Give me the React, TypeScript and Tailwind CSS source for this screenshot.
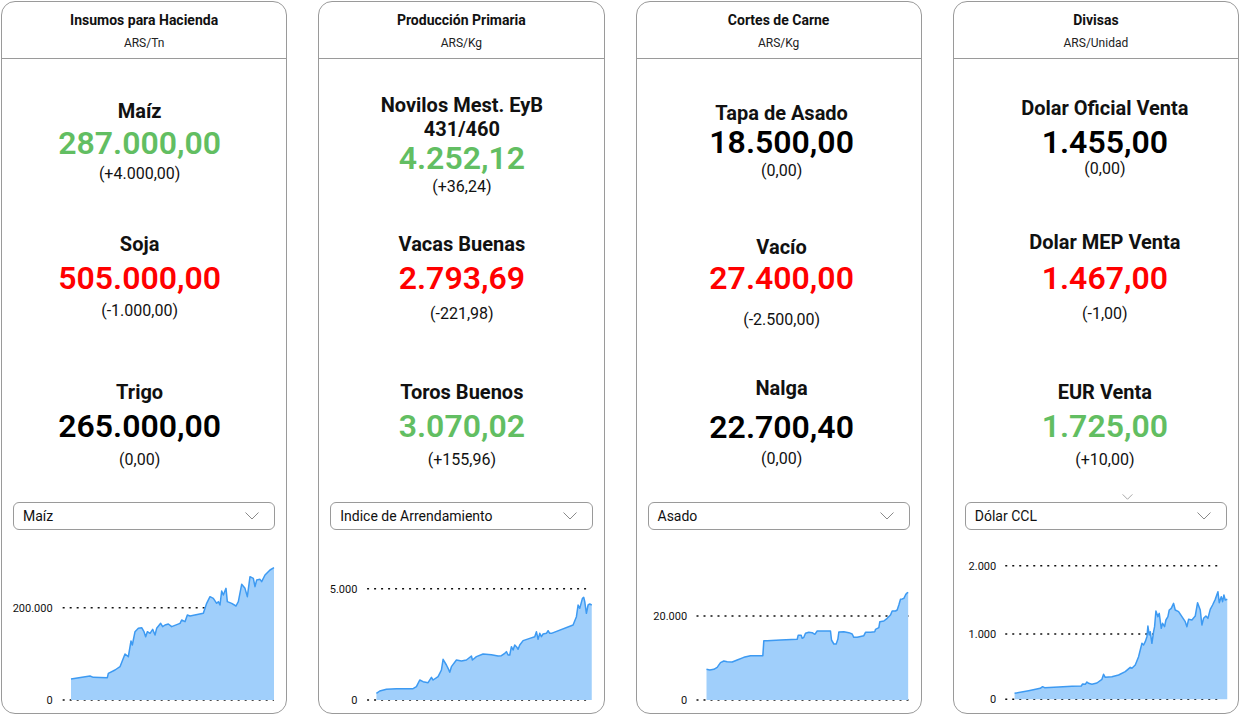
import React from 'react';

type Quote = {
  name: string[];
  value: string;
  change: string;
  tone: 'up' | 'down' | 'flat';
  gap: string;
  valueGap: string;
  changeGap: string;
};

type Chart = {
  viewBox: string;
  baseline: number;
  left: number;
  right: number;
  labelEnd: number;
  ticks: { y: number; label: string }[];
  points: [number, number][];
};

type Panel = {
  title: string;
  unit: string;
  shift: string;
  quotes: Quote[];
  select: string;
  chart: Chart;
  stray?: boolean;
};

const panels: Panel[] = [
  {
    title: 'Insumos para Hacienda',
    unit: 'ARS/Tn',
    shift: 'pr-[9px]',
    select: 'Maíz',
    quotes: [
      { name: ['Maíz'], value: '287.000,00', change: '(+4.000,00)', tone: 'up', gap: 'mt-[40px]', valueGap: 'mt-[2px]', changeGap: 'mt-[3px]' },
      { name: ['Soja'], value: '505.000,00', change: '(-1.000,00)', tone: 'down', gap: 'mt-[48px]', valueGap: 'mt-[4px]', changeGap: 'mt-[5px]' },
      { name: ['Trigo'], value: '265.000,00', change: '(0,00)', tone: 'flat', gap: 'mt-[59px]', valueGap: 'mt-[4px]', changeGap: 'mt-[6px]' },
    ],
    chart: {
      viewBox: '6 165 852.75 531',
      baseline: 660,
      left: 188,
      right: 822,
      labelEnd: 158,
      ticks: [{ y: 383, label: '200.000' }, { y: 660, label: '0' }],
      points: [
        [213, 597], [270, 588], [280, 592], [322, 593], [325, 580], [345, 570], [360, 560], [375, 522], [385, 530],
        [393, 483], [397, 495], [405, 455], [415, 445], [425, 443], [432, 455], [437, 470], [442, 455], [450, 460],
        [458, 448], [465, 465], [470, 445], [482, 430], [488, 440], [495, 435], [505, 432], [515, 440], [540, 430],
        [545, 420], [555, 425], [562, 405], [570, 408], [610, 400], [620, 370], [630, 350], [640, 355], [650, 370],
        [655, 365], [660, 375], [665, 333], [670, 345], [678, 325], [682, 365], [695, 370], [708, 378], [715, 365],
        [725, 313], [735, 325], [742, 350], [750, 290], [760, 295], [765, 320], [770, 300], [780, 298], [785, 305],
        [795, 285], [810, 270], [822, 263],
      ],
    },
  },
  {
    title: 'Producción Primaria',
    unit: 'ARS/Kg',
    shift: 'pl-px',
    select: 'Indice de Arrendamiento',
    quotes: [
      { name: ['Novilos Mest. EyB', '431/460'], value: '4.252,12', change: '(+36,24)', tone: 'up', gap: 'mt-[34px]', valueGap: '-mt-px', changeGap: 'mt-[1px]' },
      { name: ['Vacas Buenas'], value: '2.793,69', change: '(-221,98)', tone: 'down', gap: 'mt-[35px]', valueGap: 'mt-[4px]', changeGap: 'mt-[8px]' },
      { name: ['Toros Buenos'], value: '3.070,02', change: '(+155,96)', tone: 'up', gap: 'mt-[56px]', valueGap: 'mt-[4px]', changeGap: 'mt-[6px]' },
    ],
    chart: {
      viewBox: '27.75 165 852.75 531',
      baseline: 660,
      left: 172,
      right: 840,
      labelEnd: 143,
      ticks: [{ y: 326, label: '5.000' }, { y: 660, label: '0' }],
      points: [
        [200, 640], [210, 633], [230, 628], [260, 626], [310, 626], [320, 620], [330, 600], [340, 605], [355, 608],
        [365, 592], [370, 600], [385, 590], [395, 570], [400, 538], [410, 555], [415, 565], [420, 577], [425, 560],
        [440, 540], [455, 543], [470, 540], [485, 528], [488, 540], [500, 530], [520, 522], [545, 524], [565, 528],
        [575, 527], [585, 520], [590, 515], [595, 525], [600, 525], [605, 500], [610, 510], [615, 495], [620, 500],
        [625, 508], [630, 495], [640, 482], [660, 475], [675, 470], [680, 455], [685, 478], [690, 460], [695, 470],
        [700, 462], [710, 460], [715, 452], [720, 460], [725, 460], [790, 435], [800, 410], [805, 375], [810, 385],
        [818, 355], [822, 352], [825, 365], [830, 400], [835, 375], [840, 372], [846, 375],
      ],
    },
  },
  {
    title: 'Cortes de Carne',
    unit: 'ARS/Kg',
    shift: 'pl-[6px]',
    select: 'Asado',
    quotes: [
      { name: ['Tapa de Asado'], value: '18.500,00', change: '(0,00)', tone: 'flat', gap: 'mt-[42px]', valueGap: '-mt-px', changeGap: 'mt-[1px]' },
      { name: ['Vacío'], value: '27.400,00', change: '(-2.500,00)', tone: 'down', gap: 'mt-[54px]', valueGap: 'mt-[1px]', changeGap: 'mt-[14px]' },
      { name: ['Nalga'], value: '22.700,40', change: '(0,00)', tone: 'flat', gap: 'mt-[46px]', valueGap: 'mt-[9px]', changeGap: 'mt-[4px]' },
    ],
    chart: {
      viewBox: '19.5 165 852.75 531',
      baseline: 660,
      left: 198,
      right: 835,
      labelEnd: 170,
      ticks: [{ y: 408, label: '20.000' }, { y: 660, label: '0' }],
      points: [
        [228, 568], [238, 570], [250, 568], [260, 562], [270, 548], [280, 543], [290, 545], [305, 546], [320, 540],
        [340, 532], [360, 527], [380, 527], [397, 527], [400, 482], [410, 482], [450, 480], [500, 478], [503, 466],
        [512, 466], [515, 475], [520, 472], [525, 460], [535, 457], [545, 458], [553, 463], [560, 453], [600, 453],
        [603, 480], [610, 492], [617, 492], [622, 478], [625, 456], [640, 455], [655, 458], [665, 462], [670, 472],
        [680, 472], [700, 467], [705, 457], [720, 457], [733, 455], [735, 448], [745, 443], [748, 425], [760, 423],
        [770, 415], [780, 405], [785, 393], [795, 393], [800, 390], [805, 375], [810, 358], [815, 357], [820, 355],
        [825, 345], [828, 340], [833, 337],
      ],
    },
  },
  {
    title: 'Divisas',
    unit: 'ARS/Unidad',
    shift: 'pl-[18px]',
    select: 'Dólar CCL',
    stray: true,
    quotes: [
      { name: ['Dolar Oficial Venta'], value: '1.455,00', change: '(0,00)', tone: 'flat', gap: 'mt-[37px]', valueGap: 'mt-[4px]', changeGap: '-mt-px' },
      { name: ['Dolar MEP Venta'], value: '1.467,00', change: '(-1,00)', tone: 'down', gap: 'mt-[51px]', valueGap: 'mt-[6px]', changeGap: 'mt-[8px]' },
      { name: ['EUR Venta'], value: '1.725,00', change: '(+10,00)', tone: 'up', gap: 'mt-[56px]', valueGap: 'mt-[4px]', changeGap: 'mt-[6px]' },
    ],
    chart: {
      viewBox: '26.25 165 852.75 531',
      baseline: 658,
      left: 180,
      right: 820,
      labelEnd: 153,
      ticks: [{ y: 257, label: '2.000' }, { y: 462, label: '1.000' }, { y: 658, label: '0' }],
      points: [
        [208, 640], [250, 632], [285, 625], [292, 620], [298, 623], [340, 621], [380, 619], [408, 618], [412, 612],
        [420, 613], [425, 606], [430, 610], [440, 613], [455, 609], [470, 598], [475, 583], [480, 592], [500, 590],
        [520, 585], [540, 575], [555, 562], [560, 565], [570, 555], [580, 530], [585, 510], [590, 490], [595, 495],
        [600, 485], [605, 470], [608, 438], [612, 465], [615, 455], [620, 490], [625, 455], [628, 440], [632, 393],
        [638, 410], [642, 400], [648, 445], [652, 430], [658, 440], [662, 420], [668, 410], [672, 390], [678, 385],
        [685, 370], [690, 390], [700, 395], [710, 410], [720, 425], [725, 440], [730, 418], [740, 420], [750, 408],
        [757, 368], [765, 390], [770, 435], [775, 415], [782, 408], [788, 415], [795, 388], [802, 375], [810, 358],
        [818, 335], [822, 368], [828, 350], [832, 365], [836, 345], [840, 360], [846, 358],
      ],
    },
  },
];

const toneClass = {
  up: 'text-[#62be62]',
  down: 'text-[#ff0000]',
  flat: 'text-black',
};

function Chevron({ className }: { className?: string }) {
  return (
    <svg width="14" height="8" viewBox="0 0 14 8" className={className} fill="none">
      <polyline points="0.5,0.5 7,7 13.5,0.5" stroke="#8a8a8a" strokeWidth="1" />
    </svg>
  );
}

function AreaChart({ chart }: { chart: Chart }) {
  const pts = chart.points;
  const line = pts.map(([x, y]) => `${x},${y}`).join(' ');
  const area = `${pts[0][0]},${chart.baseline} ${line} ${pts[pts.length - 1][0]},${chart.baseline}`;

  return (
    <svg viewBox={chart.viewBox} preserveAspectRatio="none" className="mt-[5px] h-[177px] w-full shrink-0">
      {/* grid sits under the area */}
      {chart.ticks.map(t => (
        <g key={t.label}>
          <line x1={chart.left} x2={chart.right} y1={t.y} y2={t.y} stroke="#111" strokeWidth="4.5" strokeDasharray="6 15" />
          <text x={chart.labelEnd} y={t.y + 12} textAnchor="end" fontSize="33" fill="#111" fontFamily="Roboto, sans-serif">
            {t.label}
          </text>
        </g>
      ))}
      <polygon points={area} fill="#a0cffb" />
      <polyline points={line} fill="none" stroke="#3d9af2" strokeWidth="4.5" strokeLinejoin="round" />
    </svg>
  );
}

function PanelCard({ panel }: { panel: Panel }) {
  return (
    <div className="relative flex h-[713px] flex-col rounded-[14px] border border-[#9a9a9a] bg-white">
      {/* Header */}
      <div className="flex h-[57px] shrink-0 flex-col items-center border-b border-[#9a9a9a] pt-[9px]">
        <div className="text-[14px] leading-[19px] font-bold text-[#111]">{panel.title}</div>
        <div className="mt-[5px] text-[12px] leading-[16px] text-[#222]">{panel.unit}</div>
      </div>

      {/* Quotes */}
      <div className={`flex flex-col items-center ${panel.shift}`}>
        {panel.quotes.map(q => (
          <div key={q.value} className={`flex flex-col items-center ${q.gap}`}>
            {q.name.map(n => (
              <div key={n} className="text-[20px] leading-[24px] font-bold text-[#111]">{n}</div>
            ))}
            <div className={`text-[32px] leading-[36px] font-semibold ${toneClass[q.tone]} ${q.valueGap}`}>{q.value}</div>
            <div className={`text-[16px] leading-[20px] text-[#111] ${q.changeGap}`}>{q.change}</div>
          </div>
        ))}
      </div>

      {/* Select + chart */}
      <div className="mt-auto flex flex-col pb-px">
        <div className="relative mx-[11px] flex h-[28px] items-center justify-between rounded-[6px] border border-[#9a9a9a] pl-[9px] pr-[10px]">
          <span className="text-[14px] text-[#111]">{panel.select}</span>
          <Chevron className="mr-[5px]" />
          {panel.stray && <Chevron className="absolute -top-[9px] left-[156px] h-[6px] w-[11px]" />}
        </div>
        <AreaChart chart={panel.chart} />
      </div>
    </div>
  );
}

export default function App() {
  return (
    <div className="h-[715px] w-[1240px] bg-white px-px pt-px" style={{ fontFamily: 'Roboto, "Liberation Sans", sans-serif' }}>
      <div className="grid grid-cols-4 gap-[31px]">
        {panels.map(p => (
          <PanelCard key={p.title} panel={p} />
        ))}
      </div>
    </div>
  );
}
